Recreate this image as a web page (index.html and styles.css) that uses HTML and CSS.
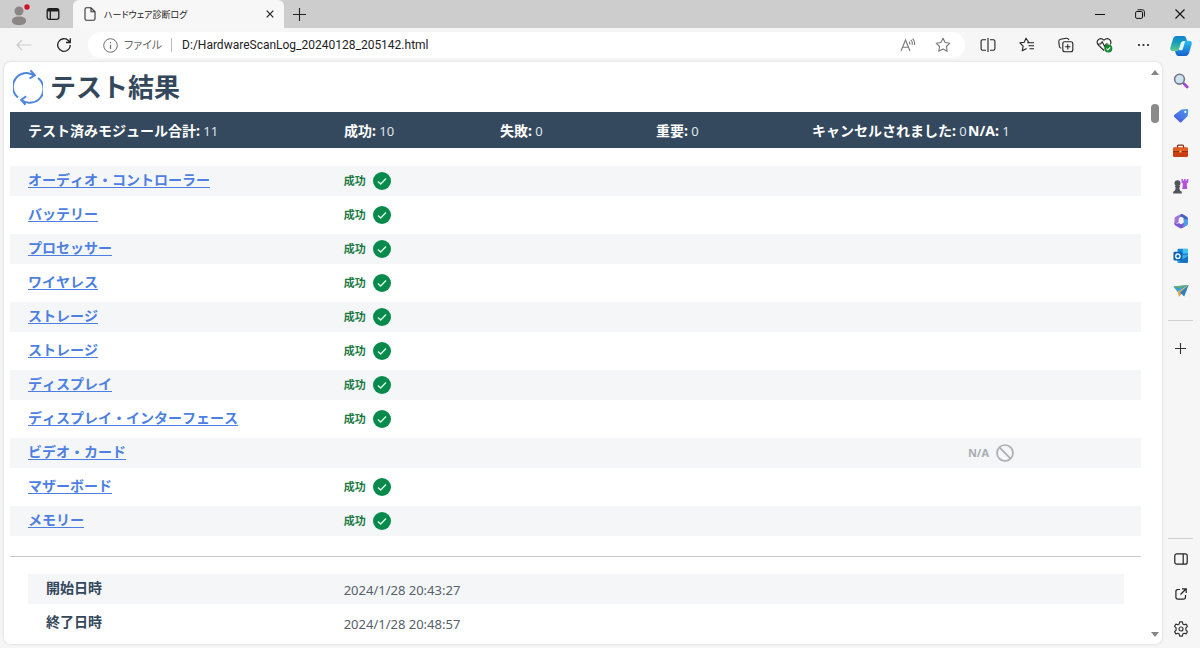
FILE: index.html
```html
<!DOCTYPE html>
<html lang="ja">
<head>
<meta charset="utf-8">
<meta name="viewport" content="width=device-width, initial-scale=1">
<title>ハードウェア診断ログ</title>
<link rel="stylesheet" href="styles.css">
</head>
<body>
<svg class="defs" aria-hidden="true">
  <symbol id="ok" viewBox="0 0 18 18"><circle cx="9" cy="9" r="9" fill="#078a4b"/><path d="M5 9.4l2.7 2.6L13 6.500" fill="none" stroke="#d9f5e6" stroke-width="1.400"/></symbol>
  <symbol id="na" viewBox="0 0 18 18"><g fill="none" stroke="#aaaeb3" stroke-width="1.700"><circle cx="9" cy="9" r="8"/><path d="M3.400 3.400l11.200 11.200"/></g></symbol>
</svg>

<header class="titlebar">
  <button class="title-btn" aria-label="プロファイル"><svg width="22" height="24" viewBox="0 0 22 24"><circle cx="11" cy="9" r="4.500" fill="#8b8683"/><path d="M4 19c0-3 2-4.500 7-4.500s7 1.500 7 4.500c0 2.500-2.500 4-7 4s-7-1.500-7-4z" fill="#8b8683"/><circle cx="19" cy="5" r="2.700" fill="#d3132b"/></svg></button>
  <button class="title-btn" aria-label="タブ操作メニュー"><svg width="14" height="14" viewBox="0 0 14 14" fill="none" stroke="#1c1c1c" stroke-width="1.300"><rect x="1.200" y="1.700" width="11.600" height="10.600" rx="2"/><path d="M1.500 3.200h11" stroke-width="2.600"/><path d="M4.300 4v8"/></svg></button>
  <div class="tab">
    <svg width="12" height="14" viewBox="0 0 12 14" fill="none" stroke="#333" stroke-width="1.100"><path d="M7 .8H2.300Q1 .8 1 2.200v9.600q0 1.400 1.300 1.400h7.400q1.300 0 1.300-1.400V4.800zM7 .8v4h4"/></svg>
    <span class="tab-name">ハードウェア診断ログ</span>
    <button class="tab-close" aria-label="タブを閉じる"><svg width="8" height="8" viewBox="0 0 8 8" stroke="#222" stroke-width="1.200"><path d="M.7.7l6.600 6.600M7.300.7L.7 7.300"/></svg></button>
  </div>
  <button class="new-tab" aria-label="新しいタブ"><svg width="13" height="13" viewBox="0 0 13 13" stroke="#222" stroke-width="1.100"><path d="M6.500 0v13M0 6.500h13"/></svg></button>
  <div class="window-btns">
    <button aria-label="最小化"><svg width="10" height="10" viewBox="0 0 10 10" stroke="#111"><path d="M0 5.500h10"/></svg></button>
    <button aria-label="元に戻す"><svg width="10" height="10" viewBox="0 0 10 10" fill="none" stroke="#111"><rect x=".6" y="2.500" width="6.900" height="6.900" rx="1.300"/><path d="M2.600.8h4.800q2 0 2 2v4.800"/></svg></button>
    <button aria-label="閉じる"><svg width="10" height="10" viewBox="0 0 10 10" stroke="#111" stroke-width="1.100"><path d="M.5.5l9 9M9.500.5l-9 9"/></svg></button>
  </div>
</header>

<div class="shell">
  <div class="viewport">
    <nav class="toolbar" aria-label="ツールバー">
      <button class="nav-btn" aria-label="戻る" disabled><svg width="16" height="12" viewBox="0 0 16 12" fill="none" stroke="#cbcbcb" stroke-width="1.200"><path d="M15.500 6H1M6 1L1 6l5 5"/></svg></button>
      <button class="nav-btn" aria-label="更新"><svg width="16" height="16" viewBox="0 0 16 16" fill="none" stroke="#222" stroke-width="1.300"><path d="M14.300 8A6.300 6.300 0 1 1 12.600 3.700L14 5.300M14.300 1.200v4.300H10"/></svg></button>
      <div class="address">
        <svg width="15" height="15" viewBox="0 0 15 15" fill="none" stroke="#6c6c6c"><circle cx="7.500" cy="7.500" r="6.800"/><path d="M7.500 6.700v4.300M7.500 4v1.300" stroke-width="1.200"/></svg>
        <label class="scheme" for="url">ファイル</label>
        <input class="url" id="url" type="text" value="D:/HardwareScanLog_20240128_205142.html">
        <button class="pill-btn" aria-label="音声で読み上げる"><svg width="16" height="14" viewBox="0 0 16 14" fill="none" stroke="#777" stroke-width="1.100"><path d="M1 13L5.500 2 10 13M2.600 9.300h5.800M9 3.600q1.200 1.200.7 2.700M10.800 1.800q2.200 2 1.200 4.900M12.600.6q2.900 2.800 1.700 6.300"/></svg></button>
        <button class="pill-btn" aria-label="お気に入りに追加"><svg width="16" height="16" viewBox="0 0 16 16" fill="none" stroke="#777" stroke-width="1.100" stroke-linejoin="round"><path d="M8 1.200l2.100 4.300 4.700.7-3.400 3.300.8 4.700L8 12l-4.200 2.200.8-4.700L1.200 6.200l4.700-.7z"/></svg></button>
      </div>
      <div class="tools">
        <button aria-label="分割画面"><svg width="16" height="14" viewBox="0 0 16 14" fill="none" stroke="#222" stroke-width="1.100"><path d="M6 1.800H2.600Q1.100 1.800 1.100 3.300v7.400q0 1.500 1.500 1.500H6M10 1.800h3.400q1.500 0 1.500 1.500v7.400q0 1.500-1.500 1.500H10M8 0v14"/></svg></button>
        <button aria-label="お気に入り"><svg width="16" height="16" viewBox="0 0 16 16" fill="none" stroke="#222" stroke-width="1.100" stroke-linejoin="round"><path d="M8.200 5.700H15M9.500 8.800H15M10.500 11.800H15M9.700 5.200L7 1.200 5.200 5.300l-4.300.6 3.200 3.200-.8 4.700 4.300-2.200"/></svg></button>
        <button aria-label="コレクション"><svg width="16" height="16" viewBox="0 0 16 16" fill="none" stroke="#222" stroke-width="1.100"><rect x="4.800" y="4.800" width="10" height="10" rx="2"/><path d="M9.800 7.200v5.200M7.200 9.800h5.200M3.200 11.300Q1.500 10.900 1.300 9.300L.8 4.500Q.7 2.600 2.500 2.300l5.800-1q2-.2 2.600 1.700"/></svg></button>
        <button aria-label="ブラウザーのエッセンシャル"><svg width="17" height="16" viewBox="0 0 17 16" fill="none" stroke="#222" stroke-width="1.100"><path d="M8 13.500L2.200 8Q.2 5.500 1.900 3.100 4.700.2 8 3.200q3.300-3 6.100-.1 1.500 2.100.3 4.300M1.500 7h3l1.700-2.200 2.400 4.600L10.200 7h2"/><circle cx="12.300" cy="11.500" r="4" fill="#14882f" stroke="none"/><path d="M10.400 11.600l1.400 1.300 2.400-2.500" stroke="#fff"/></svg></button>
        <button aria-label="設定など"><svg width="13" height="4" viewBox="0 0 13 4" fill="#222"><circle cx="2" cy="2" r="1.100"/><circle cx="6.500" cy="2" r="1.100"/><circle cx="11" cy="2" r="1.100"/></svg></button>
      </div>
    </nav>

    <div class="panel">
      <main class="report">
        <h1 class="heading"><svg width="30" height="38" viewBox="0 0 30 38" fill="none" stroke="#4d86e2" stroke-width="2"><path d="M5 29.500A13.700 13.700 0 0 1 21 7.300M17.500 2.300l4.300 5-5.300 3.200M25 10A13.700 13.700 0 0 1 8.500 32M12.500 36.700l-4.300-4.700 5-3.700"/></svg>テスト結果</h1>
        <ul class="summary">
          <li><b>テスト済みモジュール合計:</b> 11</li>
          <li><b>成功:</b> 10</li>
          <li><b>失敗:</b> 0</li>
          <li><b>重要:</b> 0</li>
          <li><b>キャンセルされました:</b> 0</li>
          <li><b>N/A:</b> 1</li>
        </ul>
        <table class="results">
          <colgroup><col class="col-name"><col class="col-state"><col class="col-state"><col class="col-state"><col class="col-state"><col></colgroup>
          <tbody>
            <tr><th scope="row"><a href="#audio">オーディオ・コントローラー</a></th><td><span class="state pass">成功<svg><use href="#ok"/></svg></span></td><td></td><td></td><td></td><td></td></tr>
            <tr><th scope="row"><a href="#battery">バッテリー</a></th><td><span class="state pass">成功<svg><use href="#ok"/></svg></span></td><td></td><td></td><td></td><td></td></tr>
            <tr><th scope="row"><a href="#cpu">プロセッサー</a></th><td><span class="state pass">成功<svg><use href="#ok"/></svg></span></td><td></td><td></td><td></td><td></td></tr>
            <tr><th scope="row"><a href="#wireless">ワイヤレス</a></th><td><span class="state pass">成功<svg><use href="#ok"/></svg></span></td><td></td><td></td><td></td><td></td></tr>
            <tr><th scope="row"><a href="#storage1">ストレージ</a></th><td><span class="state pass">成功<svg><use href="#ok"/></svg></span></td><td></td><td></td><td></td><td></td></tr>
            <tr><th scope="row"><a href="#storage2">ストレージ</a></th><td><span class="state pass">成功<svg><use href="#ok"/></svg></span></td><td></td><td></td><td></td><td></td></tr>
            <tr><th scope="row"><a href="#display">ディスプレイ</a></th><td><span class="state pass">成功<svg><use href="#ok"/></svg></span></td><td></td><td></td><td></td><td></td></tr>
            <tr><th scope="row"><a href="#interface">ディスプレイ・インターフェース</a></th><td><span class="state pass">成功<svg><use href="#ok"/></svg></span></td><td></td><td></td><td></td><td></td></tr>
            <tr><th scope="row"><a href="#video">ビデオ・カード</a></th><td></td><td></td><td></td><td></td><td><span class="state none">N/A<svg><use href="#na"/></svg></span></td></tr>
            <tr><th scope="row"><a href="#board">マザーボード</a></th><td><span class="state pass">成功<svg><use href="#ok"/></svg></span></td><td></td><td></td><td></td><td></td></tr>
            <tr><th scope="row"><a href="#memory">メモリー</a></th><td><span class="state pass">成功<svg><use href="#ok"/></svg></span></td><td></td><td></td><td></td><td></td></tr>
          </tbody>
        </table>
        <hr class="rule">
        <table class="times">
          <colgroup><col class="col-label"><col></colgroup>
          <tbody>
            <tr><th scope="row">開始日時</th><td>2024/1/28 20:43:27</td></tr>
            <tr><th scope="row">終了日時</th><td>2024/1/28 20:48:57</td></tr>
          </tbody>
        </table>
      </main>
      <div class="scrollbar" aria-hidden="true"><i class="arrow-up"></i><i class="thumb"></i><i class="arrow-down"></i></div>
    </div>
  </div>

  <aside class="sidebar" aria-label="サイドバー">
    <button aria-label="Copilot"><svg width="22" height="20" viewBox="0 0 22 20"><defs><linearGradient id="c1" x1="0" y1="0" x2="0" y2="1"><stop stop-color="#1480d0"/><stop offset=".45" stop-color="#16a0b8"/><stop offset="1" stop-color="#62c98a"/></linearGradient><linearGradient id="c2" x1="0" y1="0" x2="0" y2="1"><stop stop-color="#29c0ee"/><stop offset="1" stop-color="#1560cc"/></linearGradient></defs><path d="M6.500 0h7q2 0 2.600 2l.9 3h-3q-2 0-2.600 2L9.600 12.500Q8.900 15 6.600 15H3Q-.6 15 .5 11L3 3Q4 0 6.500 0z" fill="url(#c1)"/><path d="M15.500 20h-7q-2 0-2.600-2l-.9-3q3.800.2 4.800-2.800h2.400l1.800-5.400q.6-2 2.600-2H19q3.600 0 2.500 4L19 17q-1 3-3.500 3z" fill="url(#c2)"/><path d="M12.300 5.700h1.800q.9 0 .6 1l-1.900 6.200q-.4 1.300-1.600 1.300H9.600q-.9 0-.6-1l1.900-6.200q.4-1.300 1.400-1.300z" fill="#e4f6fd"/></svg></button>
    <button aria-label="検索"><svg width="16" height="16" viewBox="0 0 16 16" fill="none"><circle cx="6.500" cy="6.200" r="4.900" fill="#cfe2f2" stroke="#737983" stroke-width="1.600"/><path d="M10 9.800l1.500 1.500" stroke="#737983" stroke-width="2"/><path d="M11.200 11l3 3" stroke="#a446cf" stroke-width="2.700" stroke-linecap="round"/></svg></button>
    <button aria-label="ショッピング"><svg width="16" height="16" viewBox="0 0 16 16"><defs><linearGradient id="tg" x1="1" y1="0" x2="0" y2="1"><stop stop-color="#4ba0ee"/><stop offset="1" stop-color="#4a51dc"/></linearGradient></defs><path d="M9 1.600l5-.6q1.300 0 1.300 1.300l-.5 5q-.1.700-.6 1.200L8.600 14q-1 1-2 0L1.300 9q-1-1-.1-2L7.500 2.200q.6-.5 1.500-.6z" fill="url(#tg)"/><circle cx="12.300" cy="3.900" r="1.100" fill="#fff"/></svg></button>
    <button aria-label="ツール"><svg width="17" height="14" viewBox="0 0 17 14"><path d="M5.500 4V2q0-.9.900-.9h4.200q.9 0 .9.900v2" fill="none" stroke="#813015" stroke-width="1.300"/><rect x="1" y="3.500" width="15" height="9.500" rx="1.300" fill="#c93e12"/><path d="M1 4.800Q1 3.500 2.300 3.500h12.400q1.300 0 1.300 1.300V7.500H1z" fill="#e15c22"/><path d="M1 7.500h15" stroke="#963010"/><rect x="7.500" y="6.500" width="2" height="2" fill="#ffc26c"/></svg></button>
    <button aria-label="ゲーム"><svg width="17" height="16" viewBox="0 0 17 16"><path d="M9.500 1h1.400v1.500h1.200V1h1.500v1.500h1.200V1h1.500v3.500l-1.500 1 .4 5.500h-4.900l.6-5.500-1.400-1z" fill="#b450dc"/><circle cx="5.500" cy="5.200" r="3" fill="#54545c"/><path d="M3 8h5v1.200H7.200l.8 3.300 1.800 1.200v1.800H1.200v-1.800L3 12.500l.8-3.300H3z" fill="#54545c"/></svg></button>
    <button aria-label="Microsoft 365"><svg width="16" height="16" viewBox="0 0 16 16"><path d="M8.500.7L3 3.500Q1.500 4.300 1.500 6v5l4.200-1.800V6q0-1 1-1.500l3-1.500z" fill="#a074df"/><path d="M8.500.7q1 0 5 2.700Q15 4.300 15 6v4l-4.200-2.200V6q0-1-1-1.500L7 3.300z" fill="#4461c9"/><path d="M15 7.700V10q0 1.700-1.500 2.600L9.400 15q-1.400.8-2.800 0L2 12.300Q1 11.500 1.500 9.500q2.500 1.700 4.500.4l1 .8q1 .6 2 0l1.800-1V6z" fill="#7b59ce"/><path d="M15 6.200V10q0 1.700-1.500 2.600l-3 1.800V9.800q.3-.3.300-.8V6z" fill="#4d9ee6"/><circle cx="8.200" cy="7.700" r="2.300" fill="#f6f6f6"/></svg></button>
    <button aria-label="Outlook"><svg width="16" height="16" viewBox="0 0 16 16"><rect x="4.500" y=".8" width="10.500" height="13" rx="1" fill="#1489d7"/><path d="M9.800 1H14q1 0 1 1v3.500H9.800z" fill="#45c3ed"/><path d="M4.500 7.500L15 7v7q0 1-1 1H5.500q-1 0-1-1z" fill="#35b0e9"/><path d="M4.500 14.500L15 8v6q0 1-1 1z" fill="#1573c1"/><rect x=".5" y="3.800" width="8.800" height="8.800" rx="1" fill="#0963b2"/><circle cx="4.900" cy="8.200" r="2.200" fill="none" stroke="#fff" stroke-width="1.300"/></svg></button>
    <button aria-label="Drop"><svg width="16" height="14" viewBox="0 0 16 14"><path d="M.3 2.500L15.700 1 4.700 8z" fill="#38a2d3"/><path d="M15.700 1L4.700 8l1.200 5L9 9.500z" fill="#e6a443"/><path d="M15.700 1L7 8.500l4.200 4z" fill="#2982c0"/><path d="M.3 2.500l5.700 2L15.700 1z" fill="#69a873"/></svg></button>
    <hr class="divider first">
    <button aria-label="追加"><svg width="11" height="11" viewBox="0 0 11 11" stroke="#333" stroke-width="1.100"><path d="M5.500 0v11M0 5.500h11"/></svg></button>
    <hr class="divider last">
    <button aria-label="サイドバーを隠す"><svg width="14" height="12" viewBox="0 0 14 12" fill="none" stroke="#222" stroke-width="1.200"><rect x=".8" y=".8" width="12.400" height="10.400" rx="2"/><path d="M9.200 1v10"/></svg></button>
    <button aria-label="外部で開く"><svg width="12" height="12" viewBox="0 0 12 12" fill="none" stroke="#222" stroke-width="1.200"><path d="M5 1.500H3Q.9 1.500.9 3.600V9q0 2.100 2.100 2.100h5.400q2.100 0 2.100-2.100V7M7 .8h4.200V5M11 1L5.500 6.500"/></svg></button>
    <button aria-label="設定"><svg width="16" height="16" viewBox="0 0 16 16" fill="none" stroke="#333" stroke-width="1.200" stroke-linejoin="round"><circle cx="8" cy="8" r="2"/><path d="M6.700.9h2.600l.5 2 1.300.8 2-.6 1.300 2.200-1.500 1.500v2.400l1.500 1.500-1.300 2.200-2-.6-1.300.8-.5 2H6.700l-.5-2-1.300-.8-2 .6-1.300-2.200 1.500-1.500V6.800L1.600 5.300l1.300-2.200 2 .6 1.300-.8z"/></svg></button>
  </aside>
</div>
</body>
</html>
```

FILE: styles.css
```css
* {
  box-sizing: border-box;
}

body {
  display: flex;
  flex-direction: column;
  min-height: 100vh;
  margin: 0;
  background: #f6f6f6;
  color: #34485c;
  font-family: "Noto Sans", "Noto Sans CJK JP", sans-serif;
  font-size: 14px;
  font-kerning: none;
}

button {
  display: flex;
  align-items: center;
  justify-content: center;
  flex: none;
  padding: 0;
  border: 0;
  background: transparent;
}

svg {
  flex: none;
}

.defs {
  position: absolute;
  width: 0;
  height: 0;
}

/* Window title bar */
.titlebar {
  display: flex;
  height: 28px;
  padding-left: 2px;
  background: #cdcdcd;
}

.title-btn {
  width: 34px;
}

.tab {
  display: flex;
  align-items: center;
  width: 211px;
  margin-left: 3px;
  padding: 0 8px 0 11px;
  border-radius: 6px 6px 0 0;
  background: #f7f7f7;
}

.tab-name {
  flex: 1;
  padding-left: 8px;
  color: #222;
  font-size: 9px;
  font-feature-settings: "palt";
  white-space: nowrap;
}

.tab-close {
  width: 12px;
  height: 20px;
}

.new-tab {
  width: 30px;
}

.window-btns {
  display: flex;
  margin-left: auto;
}

.window-btns button {
  width: 40px;
}

/* Area below the title bar */
.shell {
  display: flex;
  flex: 1;
}

.viewport {
  display: flex;
  flex: 1;
  flex-direction: column;
  min-width: 0;
}

.toolbar {
  display: flex;
  align-items: center;
  height: 34px;
  padding-left: 4px;
}

.nav-btn {
  width: 40px;
  height: 28px;
}

.address {
  display: flex;
  flex: 1;
  align-items: center;
  height: 26px;
  min-width: 0;
  margin: 0 3px 0 4px;
  padding: 0 5px 0 15px;
  border-radius: 13px;
  background: #fff;
}

.scheme {
  margin-left: 6px;
  padding-right: 9px;
  border-right: 1px solid #bbb;
  color: #666;
  font-size: 11px;
  font-feature-settings: "palt";
  line-height: 14px;
  white-space: nowrap;
}

.url {
  flex: 1;
  min-width: 0;
  padding: 0 0 0 10px;
  border: 0;
  background: transparent;
  color: #222;
  font: 12px Roboto, sans-serif;
}

.pill-btn {
  width: 35px;
  height: 26px;
}

.tools {
  display: flex;
}

.tools button {
  width: 39px;
  height: 28px;
}

/* Report page */
.panel {
  display: flex;
  flex: 1;
  margin: 0 1px 4px 4px;
  border-radius: 7px;
  background: #fff;
  box-shadow: 0 0 3px #d2d2d2;
}

.report {
  flex: 1;
  min-width: 0;
  padding: 0 7px 0 6px;
}

.heading {
  display: flex;
  align-items: center;
  gap: 7px;
  height: 50px;
  margin: 0;
  padding-left: 3px;
  font-size: 26px;
  line-height: 36px;
}

.summary {
  display: grid;
  grid-template-columns: 79fr repeat(5, 39fr);
  align-items: center;
  height: 36px;
  margin: 0;
  padding: 0 17px 0 18px;
  background: #35495e;
  color: #dfe6ec;
  font-size: 13px;
  list-style: none;
  white-space: nowrap;
}

.summary li {
  min-width: 0;
}

.summary b {
  color: #fff;
  font-size: 14px;
}

.results,
.times {
  table-layout: fixed;
  border-spacing: 0 4px;
}

.results {
  width: 100%;
  margin-top: 14px;
}

.col-name {
  width: 29.5%;
}

.col-state {
  width: 13.8%;
}

tr {
  height: 30px;
}

tr:nth-child(odd) {
  background: #f5f6f8;
}

th,
td {
  padding: 0;
  line-height: 20px;
  text-align: left;
}

th {
  padding: 0 0 2px 18px;
  white-space: nowrap;
}

.results a {
  color: #4d7fe3;
  text-decoration: underline;
  text-underline-offset: 2px;
}

.state {
  display: flex;
  align-items: center;
  gap: 7px;
  font-size: 11px;
  font-weight: bold;
}

.state svg {
  width: 18px;
  height: 18px;
}

.pass {
  color: #1c7a45;
}

.none {
  color: #a9adb2;
}

.rule {
  margin: 16px 0 13px;
  border: 0;
  border-top: 1px solid #c6c8ca;
}

.times {
  width: calc(100% - 35px);
  margin-left: 18px;
}

.col-label {
  width: 28.8%;
}

.times td {
  padding-top: 2px;
  color: #55606b;
  font-size: 13px;
}

/* Scroll bar */
.scrollbar {
  display: flex;
  flex-direction: column;
  align-items: center;
  width: 14px;
  padding: 8px 0 7px;
}

.arrow-up,
.arrow-down {
  border: 4px solid transparent;
}

.arrow-up {
  border-top: 0;
  border-bottom: 5px solid #858585;
}

.arrow-down {
  margin-top: auto;
  border-top: 5px solid #858585;
  border-bottom: 0;
}

.thumb {
  width: 8px;
  height: 19px;
  margin-top: 29px;
  border-radius: 4px;
  background: #8a8a8a;
}

/* Browser side bar */
.sidebar {
  display: flex;
  flex-direction: column;
  align-items: center;
  width: 37px;
  padding: 0 2px 2px 0;
}

.sidebar button {
  width: 35px;
  height: 35px;
}

.divider {
  width: 25px;
  margin: 0;
  border: 0;
  border-top: 1px solid #cfcfcf;
}

.first {
  margin: 12px 0 10px;
}

.last {
  margin: auto 0 2px;
}
```
